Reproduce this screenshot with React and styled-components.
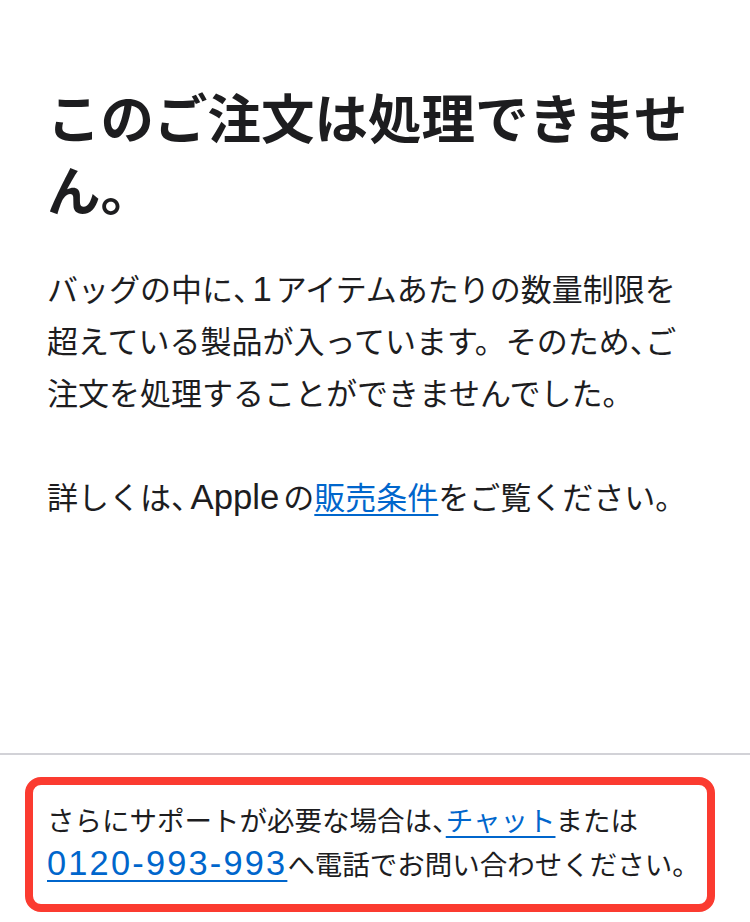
import styled, { createGlobalStyle } from 'styled-components';

const GlobalStyle = createGlobalStyle`
  html, body {
    margin: 0;
    padding: 0;
    background: #fff;
  }
  body {
    font-family: "Noto Sans CJK JP", "Noto Sans", sans-serif;
    color: #1d1d1f;
    -webkit-font-smoothing: antialiased;
  }
`;

const Page = styled.div`
  min-height: 100vh;
  display: flex;
  flex-direction: column;
`;

const Main = styled.main`
  padding: 80px 47px 0;
`;

const Title = styled.h1`
  margin: 0;
  font-size: 53.5px;
  line-height: 72px;
  font-weight: 700;
`;

const Text = styled.p`
  margin: ${({ $first }) => ($first ? '38px' : '52px')} 0 0;
  font-size: 31px;
  line-height: 52px;
  font-weight: 400;
  white-space: nowrap;
`;

// half-width ideographic comma, as the reference sets it
const Comma = styled.span`
  font-feature-settings: "halt";
`;

// latin runs inside japanese text get a little space on each side
const Latin = styled.span`
  font-family: "Liberation Sans", Arial, sans-serif;
  font-size: ${({ $scale }) => $scale || 1.12}em;
  letter-spacing: ${({ $spacing }) => $spacing || 0}px;
  margin: 0 ${({ $gap }) => ($gap === undefined ? 4 : $gap)}px;
  line-height: 1;
`;

const TextLink = styled.a`
  color: #0066cc;
  text-decoration: underline;
  text-decoration-thickness: 2px;
  text-underline-offset: 5px;
  cursor: pointer;
`;

const Footer = styled.footer`
  margin-top: auto;
  border-top: 2px solid #d2d2d7;
  padding: 22px 35px 10px 25px;
`;

const Highlight = styled.div`
  border: 8px solid #fb3b30;
  border-radius: 16px;
  padding: 12px 14px 19px;
`;

const Help = styled.p`
  margin: 0;
  font-size: 27.5px;
  line-height: 44px;
  white-space: nowrap;
`;

export default function App() {
  return (
    <>
      <GlobalStyle />
      <Page>
        <Main>
          <Title>このご注文は処理できません。</Title>
          <Text $first>
            バッグの中に<Comma>、</Comma><Latin>1</Latin>アイテムあたりの数量制限を
            <br />
            超えている製品が入っています。そのため<Comma>、</Comma>ご
            <br />
            注文を処理することができませんでした。
          </Text>
          <Text>
            詳しくは<Comma>、</Comma><Latin>Apple</Latin>の<TextLink>販売条件</TextLink>をご覧ください。
          </Text>
        </Main>
        <Footer>
          <Highlight>
            <Help>
              さらにサポートが必要な場合は<Comma>、</Comma><TextLink>チャット</TextLink>または
              <br />
              <TextLink>
                <Latin $scale={1.25} $spacing={2.2} $gap={0}>0120-993-993</Latin>
              </TextLink>
              へ電話でお問い合わせください。
            </Help>
          </Highlight>
        </Footer>
      </Page>
    </>
  );
}
